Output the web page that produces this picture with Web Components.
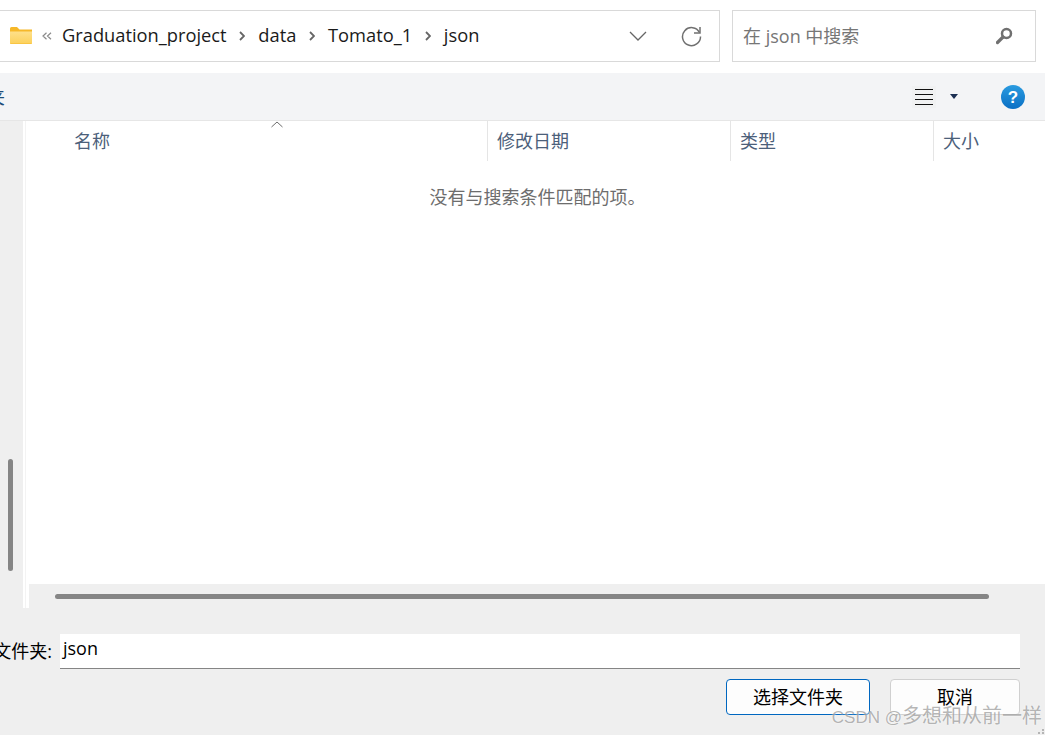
<!DOCTYPE html>
<html>
<head>
<meta charset="utf-8">
<style>
	html, body { margin: 0; height: 100%; overflow: hidden; background: #efefef; }
	body { font-family: "Open Sans", "Noto Sans CJK SC", sans-serif; }
</style>
</head>
<body>
<folder-dialog></folder-dialog>

<script>
(function ()
{
	const FONT = `"Open Sans", "Noto Sans CJK SC", sans-serif`;

	class NavBar extends HTMLElement
	{
		constructor()
		{
			super();
			const shadow = this.attachShadow({ mode: 'open' });
			shadow.innerHTML =
			`
			<style>
				:host { display: flex; box-sizing: border-box; height: 73px; padding: 10px 9px 11px 0; gap: 12px; background: #fff; font: 18px ${ FONT }; }
				.address { flex: 1; display: flex; align-items: center; box-sizing: border-box; border: 1px solid #d9d9d9; border-left: 0; padding-left: 10px; color: #1a1a1a; font-size: 18.3px; white-space: nowrap; }
				.address span { margin-bottom: 4px; }
				.folder { margin-bottom: 2px; }
				.address .more { margin: 0 10px 0 10px; width: 10px; }
				.address .sep { margin: 0 12.85px; }
				.address .end { margin-left: auto; display: flex; align-items: center; gap: 34px; margin-right: 17px; }
				.search { width: 304px; display: flex; align-items: center; justify-content: space-between; box-sizing: border-box; border: 1px solid #d9d9d9; padding: 0 21px 0 10px; color: #767676; }
				.search span { margin-bottom: 2px; }
				svg { display: block; flex: none; }
			</style>
			<div class="address">
				<svg class="folder" width="22" height="17" viewBox="0 0 22 17">
					<defs><linearGradient id="f" x1="0" y1="0" x2="0" y2="1"><stop offset="0" stop-color="#fee08a"/><stop offset="1" stop-color="#fcd15c"/></linearGradient></defs>
					<path d="M0 1.500Q0 0 1.500 0H7L9.500 2.500H22V16Q22 17 21 17H1Q0 17 0 16Z" fill="#f6b829"/>
					<path d="M0 4.500H22V16Q22 16.500 21 16.500H1Q0 16.500 0 16Z" fill="url(#f)"/>
				</svg>
				<svg class="more" width="10" height="8" viewBox="0 0 10 8" fill="none" stroke="#8a8a8a" stroke-width="1.2"><path d="M4.500 .8 1 4l3.500 3.200M9 .8 5.500 4 9 7.200"/></svg>
				<span>Graduation_project</span>
				<svg class="sep" width="6" height="10" viewBox="0 0 6 10" fill="none" stroke="#666" stroke-width="1.800"><path d="M1 1l4 4-4 4"/></svg>
				<span>data</span>
				<svg class="sep" width="6" height="10" viewBox="0 0 6 10" fill="none" stroke="#666" stroke-width="1.800"><path d="M1 1l4 4-4 4"/></svg>
				<span>Tomato_1</span>
				<svg class="sep" width="6" height="10" viewBox="0 0 6 10" fill="none" stroke="#666" stroke-width="1.800"><path d="M1 1l4 4-4 4"/></svg>
				<span>json</span>
				<div class="end">
					<svg width="18" height="10" viewBox="0 0 18 10" fill="none" stroke="#666" stroke-width="1.300"><path d="M1 1l8 8 8-8"/></svg>
					<svg width="21" height="21" viewBox="0 0 21 21" fill="none" stroke="#707070" stroke-width="1.500"><path d="M18.500 6.500A9 9 0 1 0 19.500 10.500"/><path d="M19 1v6h-6"/></svg>
				</div>
			</div>
			<div class="search">
				<span>在 json 中搜索</span>
				<svg width="18" height="18" viewBox="0 0 18 18" fill="none" stroke="#707070"><circle cx="10.500" cy="6.500" r="4.500" stroke-width="2.500"/><path d="M7 10 1.500 15.500" stroke-width="3.200" stroke-linecap="round"/></svg>
			</div>
			`;
		}
	}

	class ToolBar extends HTMLElement
	{
		constructor()
		{
			super();
			const shadow = this.attachShadow({ mode: 'open' });
			shadow.innerHTML =
			`
			<style>
				:host { display: flex; align-items: center; box-sizing: border-box; height: 48px; padding-right: 20px; background: #f3f4f6; border-bottom: 1px solid #e6e6e6; font: 18px ${ FONT }; }
				.cut { width: 5px; display: flex; justify-content: flex-end; overflow: hidden; color: #1f4e79; white-space: nowrap; margin-bottom: 2px; }
				.view { margin-left: auto; margin-right: 14px; padding: 3px; background: #f0f1f2; }
				.arrow { margin-right: 43px; width: 0; height: 0; border: 4.500px solid transparent; border-top: 5px solid #1b2f52; border-bottom: 0; }
				svg { display: block; flex: none; }
			</style>
			<div class="cut"><span>新建文件夹</span></div>
			<svg class="view" width="18" height="16" viewBox="0 0 18 16" stroke="#111" stroke-width="1">
				<path d="M0 .5h18M0 5.500h18M0 10.500h18M0 15.500h18"/>
			</svg>
			<div class="arrow"></div>
			<svg width="24" height="24" viewBox="0 0 24 24">
				<defs><linearGradient id="h" x1="0" y1="0" x2="0" y2="1"><stop offset="0" stop-color="#2a9be0"/><stop offset="1" stop-color="#0a6fc4"/></linearGradient></defs>
				<circle cx="12" cy="12" r="12" fill="url(#h)"/>
				<text x="12" y="18" text-anchor="middle" font-family="Liberation Sans" font-weight="700" font-size="17" fill="#fff">?</text>
			</svg>
			`;
		}
	}

	class SideRail extends HTMLElement
	{
		constructor()
		{
			super();
			const shadow = this.attachShadow({ mode: 'open' });
			shadow.innerHTML =
			`
			<style>
				:host { display: block; box-sizing: border-box; width: 23px; padding: 338px 0 0 8px; background: #efefef; flex: none; }
				.thumb { width: 5px; height: 112px; border-radius: 3px; background: #858585; }
			</style>
			<div class="thumb"></div>
			`;
		}
	}

	class ColHead extends HTMLElement
	{
		constructor()
		{
			super();
			const shadow = this.attachShadow({ mode: 'open' });
			shadow.innerHTML =
			`
			<style>
				:host { display: flex; align-items: center; box-sizing: border-box; height: 40px; padding: 0 0 2px 9px; border-right: 1px solid #e5e5e5; color: #4c607a; font-size: 18px; white-space: nowrap; }
				:host([last]) { border-right: 0; }
			</style>
			<slot></slot>
			`;
		}
	}

	class FileList extends HTMLElement
	{
		constructor()
		{
			super();
			const shadow = this.attachShadow({ mode: 'open' });
			shadow.innerHTML =
			`
			<style>
				:host { flex: 1; display: flex; flex-direction: column; min-width: 0; background: #efefef; font: 18px ${ FONT }; }
				.white { flex: 1; background: #fff; position: relative; min-height: 0; }
				.cols { display: grid; grid-template-columns: 459px 243px 203px 1fr; }
				.cols col-head:first-child { padding-left: 45px; }
				.sort { position: absolute; left: 242px; top: 0; }
				.empty { padding: 22px 0 0 1px; text-align: center; color: #6d6d6d; }
				.track { height: 24px; padding: 10px 56px 0 26px; box-sizing: border-box; }
				.thumb { height: 5px; border-radius: 3px; background: #858585; }
			</style>
			<div class="white">
				<div class="cols">
					<col-head>名称</col-head>
					<col-head>修改日期</col-head>
					<col-head>类型</col-head>
					<col-head last>大小</col-head>
				</div>
				<svg class="sort" width="12" height="7" viewBox="0 0 12 7" fill="none" stroke="#6d6d6d"><path d="M.5 6 6 1l5.500 5"/></svg>
				<div class="empty">没有与搜索条件匹配的项。</div>
			</div>
			<div class="track"><div class="thumb"></div></div>
			`;
		}
	}

	class FootBar extends HTMLElement
	{
		constructor()
		{
			super();
			const shadow = this.attachShadow({ mode: 'open' });
			shadow.innerHTML =
			`
			<style>
				:host { display: block; box-sizing: border-box; padding: 26px 25px 0 0; font: 18px ${ FONT }; color: #000; }
				.row { display: flex; align-items: center; height: 35px; }
				.label { width: 52px; display: flex; justify-content: flex-end; overflow: hidden; white-space: nowrap; margin: 0 8px 4px 0; }
				.input { flex: 1; box-sizing: border-box; height: 35px; padding: 0 3px 3px; background: #fff; border-bottom: 1px solid #858585; line-height: 28px; }
				.btns { display: flex; justify-content: flex-end; gap: 20px; margin-top: 10px; }
				.btn { width: 130px; height: 36px; box-sizing: border-box; padding-bottom: 2px; display: flex; align-items: center; justify-content: center; background: #fdfdfd; border: 1px solid #d0d0d0; border-radius: 4px; }
				.btn.main { width: 144px; border-color: #0067c0; }
			</style>
			<div class="row">
				<div class="label"><span>选择文件夹:</span></div>
				<div class="input">json</div>
			</div>
			<div class="btns">
				<div class="btn main">选择文件夹</div>
				<div class="btn">取消</div>
			</div>
			`;
		}
	}

	class FolderDialog extends HTMLElement
	{
		constructor()
		{
			super();
			const shadow = this.attachShadow({ mode: 'open' });
			shadow.innerHTML =
			`
			<style>
				:host { display: flex; flex-direction: column; position: relative; width: 1045px; height: 735px; overflow: hidden; background: #efefef; }
				.main { display: flex; height: 487px; }
				.strip { flex: none; display: flex; background: #fff; }
				.strip div { width: 1px; margin-left: 2px; margin-right: 3px; background: #f3f3f3; }
				.mark { position: absolute; right: 3px; bottom: 4px; font: 20px/26px "Noto Sans CJK SC", sans-serif; color: rgba(120,120,120,.55); text-shadow: 0 0 2px rgba(255,255,255,.9); white-space: nowrap; }
				.mark b { font: 17px/26px "Liberation Sans", sans-serif; }
				.grip { position: absolute; right: 0; bottom: 0; }
			</style>
			<nav-bar></nav-bar>
			<tool-bar></tool-bar>
			<div class="main">
				<side-rail></side-rail>
				<div class="strip"><div></div></div>
				<file-list></file-list>
			</div>
			<foot-bar></foot-bar>
			<div class="mark"><b>CSDN @</b>多想和从前一样</div>
			<svg class="grip" width="8" height="6" viewBox="0 0 8 6" fill="#b5b5b5"><path d="M5 0h2v2H5zM1 3h2v2H1zM5 3h2v2H5z"/></svg>
			`;
		}
	}

	customElements.define( 'nav-bar', NavBar );
	customElements.define( 'tool-bar', ToolBar );
	customElements.define( 'side-rail', SideRail );
	customElements.define( 'col-head', ColHead );
	customElements.define( 'file-list', FileList );
	customElements.define( 'foot-bar', FootBar );
	customElements.define( 'folder-dialog', FolderDialog );
})();
</script>
</body>
</html>
